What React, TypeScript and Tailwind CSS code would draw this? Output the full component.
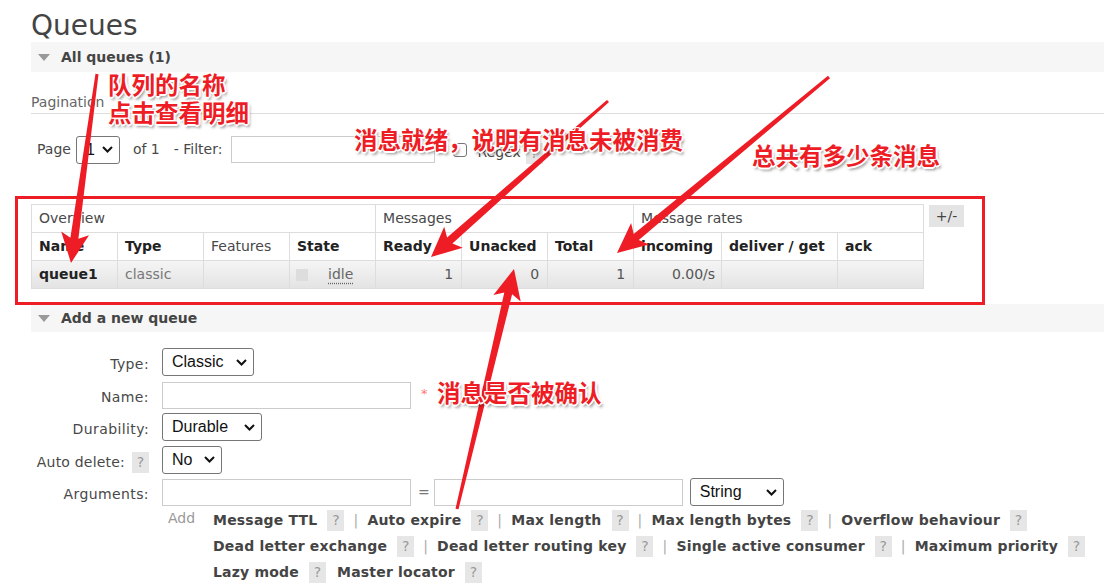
import React from "react";

const RED = "#ee1c25";

function Arrow({ x1, y1, x2, y2 }: { x1: number; y1: number; x2: number; y2: number }) {
  const dx = x2 - x1;
  const dy = y2 - y1;
  const L = Math.hypot(dx, dy);
  const ux = dx / L;
  const uy = dy / L;
  const px = -uy;
  const py = ux;
  const hl = 30;
  const hw = 14;
  const tw = 1.5;
  const sw = 4;
  const bx = x2 - ux * hl;
  const by = y2 - uy * hl;
  const ix = bx + ux * 5;
  const iy = by + uy * 5;
  const pts = [
    [x1 + px * tw, y1 + py * tw],
    [ix + px * sw, iy + py * sw],
    [bx + px * hw, by + py * hw],
    [x2, y2],
    [bx - px * hw, by - py * hw],
    [ix - px * sw, iy - py * sw],
    [x1 - px * tw, y1 - py * tw],
  ];
  return <polygon points={pts.map((p) => p.map((v) => v.toFixed(1)).join(",")).join(" ")} fill={RED} />;
}

function Chevron() {
  return (
    <svg width="11" height="7" viewBox="0 0 11 7" className="shrink-0">
      <polyline points="1,1 5.5,5.5 10,1" fill="none" stroke="#111" strokeWidth="2" />
    </svg>
  );
}

function Select({ value, className }: { value: string; className: string }) {
  return (
    <div
      className={`flex items-center justify-between h-[28px] border border-[#767676] rounded-[3px] bg-white pl-[9px] pr-[6px] text-[16px] text-[#111] font-['Liberation_Sans',sans-serif] ${className}`}
    >
      <span>{value}</span>
      <Chevron />
    </div>
  );
}

function Input({ className }: { className: string }) {
  return <div className={`h-[27px] border border-[#cccccc] bg-white ${className}`} />;
}

function Q() {
  return (
    <span className="inline-flex items-center justify-center w-[17px] h-[21px] bg-[#e6e6e6] text-[#999] font-normal text-[14px] tracking-normal">
      ?
    </span>
  );
}

function Sep() {
  return <span className="mx-[9px] text-[#aaa] font-normal">|</span>;
}

function SectionBar({ title, className }: { title: string; className: string }) {
  return (
    <div className={`flex items-center bg-[#f6f6f6] pl-[7px] ${className}`}>
      <svg width="12" height="7" viewBox="0 0 12 7">
        <polygon points="0,0 12,0 6,7" fill="#999" />
      </svg>
      <span className="ml-[11px] font-bold text-[#444]">{title}</span>
    </div>
  );
}

function Label({ children }: { children: React.ReactNode }) {
  return (
    <div className="flex items-center justify-end h-[28px] pt-[5px] text-[#484848] tracking-[0.4px]">{children}</div>
  );
}

const ann =
  "absolute whitespace-nowrap text-[23.5px] leading-[24px] font-bold text-[#ee1c25] font-['Noto_Sans_CJK_SC',sans-serif] [text-shadow:-1px_-1px_0_#fff,1px_-1px_0_#fff,-1px_1px_0_#fff,1px_1px_0_#fff,0_2px_0_#fff,2px_0_0_#fff,2px_3px_3px_rgba(0,0,0,0.45)]";

const th = "border border-[#dddddd] px-[7px] text-left";

export default function App() {
  return (
    <div className="relative w-[1104px] h-[583px] overflow-hidden bg-white text-[#484848] font-['DejaVu_Sans',sans-serif] text-[14px]">
      <div className="pl-[31px]">
        <h1 className="pt-[9px] text-[28px] leading-[33px] text-[#444]">Queues</h1>
        <SectionBar title="All queues (1)" className="h-[30px]" />
        <div className="mt-[20px] leading-[20px] text-[#666] border-b border-[#dddddd] pb-[1px]">Pagination</div>

        <div className="mt-[22px] flex items-center h-[27px] pl-[6px]">
          <span>Page</span>
          <Select value="1" className="ml-[5px] w-[44px] h-[27px]" />
          <span className="ml-[13px]">of 1</span>
          <span className="ml-[14px]">- Filter:</span>
          <Input className="ml-[9px] w-[204px]" />
          <span className="ml-[18px] w-[14px] h-[14px] border border-[#767676] rounded-[3px] bg-white" />
          <span className="ml-[10px] mt-[6px]">Regex</span>
          <span className="ml-[5px] mt-[8px]">
            <Q />
          </span>
        </div>

        <div className="mt-[41px] flex items-start">
          <table className="border-collapse table-fixed w-[892px] text-[14px]">
            <colgroup>
              <col className="w-[86px]" />
              <col className="w-[86px]" />
              <col className="w-[86px]" />
              <col className="w-[86px]" />
              <col className="w-[86px]" />
              <col className="w-[86px]" />
              <col className="w-[86px]" />
              <col className="w-[88px]" />
              <col className="w-[116px]" />
              <col className="w-[86px]" />
            </colgroup>
            <tbody>
              <tr className="h-[28px]">
                <td colSpan={4} className={`${th} font-normal`}>Overview</td>
                <td colSpan={3} className={`${th} font-normal`}>Messages</td>
                <td colSpan={3} className={`${th} font-normal`}>Message rates</td>
              </tr>
              <tr className="h-[28px] text-[#222]">
                <td className={`${th} font-bold`}>Name</td>
                <td className={`${th} font-bold`}>Type</td>
                <td className={`${th} font-normal text-[#484848]`}>Features</td>
                <td className={`${th} font-bold`}>State</td>
                <td className={`${th} font-bold`}>Ready</td>
                <td className={`${th} font-bold`}>Unacked</td>
                <td className={`${th} font-bold`}>Total</td>
                <td className={`${th} font-bold`}>incoming</td>
                <td className={`${th} font-bold`}>deliver / get</td>
                <td className={`${th} font-bold`}>ack</td>
              </tr>
              <tr className="h-[28px] bg-gradient-to-b from-[#f5f5f5] to-[#e3e3e3] text-[#555]">
                <td className={`${th} font-bold text-[#222]`}>queue1</td>
                <td className={`${th} text-[#777]`}>classic</td>
                <td className={th}></td>
                <td className="border border-[#dddddd] pl-[6px]">
                  <div className="flex items-center">
                    <span className="w-[12px] h-[12px] bg-[#dddddd]" />
                    <span className="ml-[20px] underline decoration-dotted underline-offset-[4px] text-[#666]">idle</span>
                  </div>
                </td>
                <td className="border border-[#dddddd] pr-[8px] text-right">1</td>
                <td className="border border-[#dddddd] pr-[8px] text-right">0</td>
                <td className="border border-[#dddddd] pr-[8px] text-right">1</td>
                <td className="border border-[#dddddd] pr-[6px] text-right">0.00/s</td>
                <td className="border border-[#dddddd]"></td>
                <td className="border border-[#dddddd]"></td>
              </tr>
            </tbody>
          </table>
          <div className="ml-[5px] mt-[1px] w-[35px] h-[22px] bg-[#e4e4e4] flex items-center justify-center text-[#444]">+/-</div>
        </div>

        <SectionBar title="Add a new queue" className="mt-[15px] h-[28px]" />

        <div className="mt-[16px] grid grid-cols-[118px_1fr] gap-x-[13px] gap-y-[4.5px]">
          <Label>Type:</Label>
          <div>
            <Select value="Classic" className="w-[92px]" />
          </div>

          <Label>Name:</Label>
          <div className="flex items-start">
            <Input className="w-[249px] mt-[1px]" />
            <span className="ml-[10px] mt-[3px] text-[#f77] text-[13px]">*</span>
          </div>

          <Label>Durability:</Label>
          <div>
            <Select value="Durable" className="w-[100px]" />
          </div>

          <div className="flex items-center justify-end h-[28px]">
            <span className="pt-[5px] tracking-[0.2px]">Auto delete:</span>
            <span className="ml-[7px] mt-[6px]">
              <Q />
            </span>
          </div>
          <div>
            <Select value="No" className="w-[60px]" />
          </div>

          <Label>Arguments:</Label>
          <div className="flex items-center">
            <Input className="w-[249px]" />
            <span className="ml-[7px] text-[#777]">=</span>
            <Input className="ml-[4px] w-[249px]" />
            <Select value="String" className="ml-[7px] w-[94px]" />
          </div>

          <div />
          <div className="flex items-start -mt-[3.5px]">
            <span className="w-[51px] pl-[6px] leading-[26px] -mt-[2px] text-[#999]">Add</span>
            <div className="flex flex-col font-bold text-[#444] tracking-[0.2px]">
              <div className="flex items-center h-[26px]">
                <span>Message TTL</span>
                <span className="ml-[10px]"><Q /></span>
                <Sep />
                <span>Auto expire</span>
                <span className="ml-[10px]"><Q /></span>
                <Sep />
                <span>Max length</span>
                <span className="ml-[10px]"><Q /></span>
                <Sep />
                <span>Max length bytes</span>
                <span className="ml-[10px]"><Q /></span>
                <Sep />
                <span>Overflow behaviour</span>
                <span className="ml-[10px]"><Q /></span>
              </div>
              <div className="flex items-center h-[26px]">
                <span>Dead letter exchange</span>
                <span className="ml-[10px]"><Q /></span>
                <Sep />
                <span>Dead letter routing key</span>
                <span className="ml-[10px]"><Q /></span>
                <Sep />
                <span>Single active consumer</span>
                <span className="ml-[10px]"><Q /></span>
                <Sep />
                <span>Maximum priority</span>
                <span className="ml-[10px]"><Q /></span>
              </div>
              <div className="flex items-center h-[26px]">
                <span>Lazy mode</span>
                <span className="ml-[10px]"><Q /></span>
                <span className="ml-[11px]">Master locator</span>
                <span className="ml-[10px]"><Q /></span>
              </div>
            </div>
          </div>
        </div>
      </div>

      {/* annotation overlay */}
      <div className="absolute left-[15px] top-[196px] w-[970px] h-[109px] border-[3px] border-[#ee1c25]" />
      <svg className="absolute inset-0 pointer-events-none" width="1104" height="583">
        <Arrow x1={97} y1={74} x2={71} y2={263} />
        <Arrow x1={608} y1={101} x2={431} y2={257} />
        <Arrow x1={829} y1={77} x2={617} y2={253} />
        <Arrow x1={457} y1={509} x2={514} y2={269} />
      </svg>
      <div className={`${ann} left-[108px] top-[72px]`}>队列的名称</div>
      <div className={`${ann} left-[108px] top-[100px]`}>点击查看明细</div>
      <div className={`${ann} left-[354px] top-[127px]`}>消息就绪，说明有消息未被消费</div>
      <div className={`${ann} left-[752px] top-[143px]`}>总共有多少条消息</div>
      <div className={`${ann} left-[437px] top-[380px]`}>消息是否被确认</div>
    </div>
  );
}
